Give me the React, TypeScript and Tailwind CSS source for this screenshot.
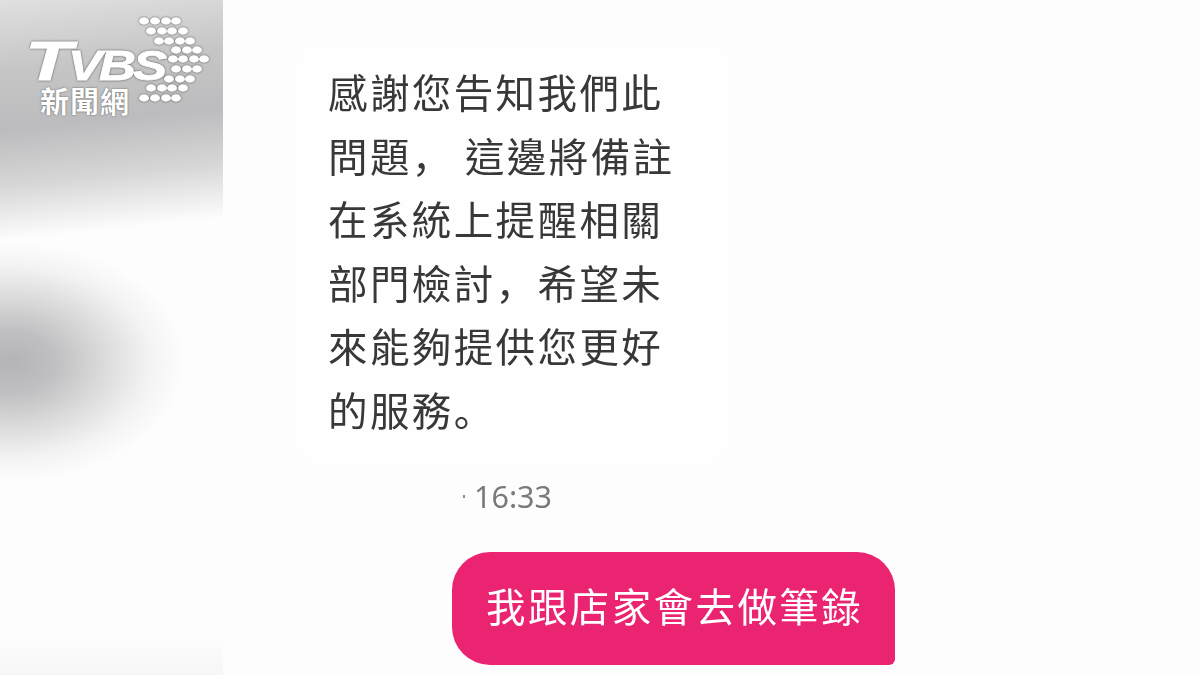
const dotRows = [
  { y: 21, xs: [144, 155, 166, 176] },
  { y: 31, xs: [151, 162, 172, 183] },
  { y: 41, xs: [159, 169, 180, 190] },
  { y: 50, xs: [176, 187, 197] },
  { y: 59, xs: [173, 183, 194, 204] },
  { y: 69, xs: [176, 187, 197] },
  { y: 79, xs: [169, 180, 190] },
  { y: 88, xs: [151, 162, 172, 183] },
  { y: 98, xs: [144, 155, 166, 176] },
];

const messageLines = [
  "感謝您告知我們此",
  "問題， 這邊將備註",
  "在系統上提醒相關",
  "部門檢討，希望未",
  "來能夠提供您更好",
  "的服務。",
];

// the comma and full stop sit low-left in the picture, as in the SC cut
function ChatLine({ text }: { text: string }) {
  return (
    <>
      {text.split(/([，。])/).map((part, i) =>
        part === "，" || part === "。" ? (
          <span key={i} className="font-['Noto_Sans_CJK_SC',sans-serif]">
            {part}
          </span>
        ) : (
          <span key={i}>{part}</span>
        ),
      )}
    </>
  );
}

function Logo() {
  return (
    <div className="absolute left-0 top-0 h-[120px] w-[223px]">
      <svg width="223" height="120" className="absolute left-0 top-0 drop-shadow-[0_0_1px_#555555]">
        {dotRows.map((row) =>
          row.xs.map((x) => (
            <ellipse key={`${row.y}-${x}`} cx={x} cy={row.y} rx="5" ry="3.7" fill="#ffffff" />
          )),
        )}
        <g
          fill="#ffffff"
          stroke="#ffffff"
          strokeWidth="0.8"
          fontFamily="'Liberation Sans', sans-serif"
          fontWeight="700"
          fontStyle="italic"
        >
          <text transform="translate(25 80) scale(1.4 1)" fontSize="55">
            T
          </text>
          <text transform="translate(68 80) scale(1.22 1)" fontSize="42" letterSpacing="-2.5">
            VBS
          </text>
        </g>
      </svg>
      <div className="absolute left-[40px] top-[86px] font-['Noto_Sans_CJK_TC',sans-serif] text-[29px] font-bold leading-[28px] tracking-[1px] text-white [text-shadow:0_0_2px_#555]">
        新聞網
      </div>
    </div>
  );
}

export default function App() {
  return (
    <div className="relative flex h-[675px] w-[1200px] overflow-hidden bg-[#fefdfe] font-['Noto_Sans_CJK_TC',sans-serif]">
      {/* blurred side strip */}
      <div className="h-full w-[223px] shrink-0 bg-[radial-gradient(ellipse_175px_120px_at_10px_362px,#b4b3b5_0%,#bfbec0_25%,#dddcdd_55%,#f4f3f4_80%,#fefdfe00_100%),linear-gradient(0deg,#f7f6f7_0px,#fefdfe00_40px),linear-gradient(174deg,#e0e0e0_0px,#c6c6c7_70px,#bcbbbd_130px,#d6d6d7_185px,#fefdfe_240px,#fefdfe_100%)]" />

      <div className="flex flex-1 flex-col items-start pl-[72px] pt-[45px]">
        <div className="h-[420px] w-[435px] rounded-[24px] bg-[#fefefe] pl-[33px] pt-[14px]">
          {messageLines.map((line) => (
            <p
              key={line}
              className="h-[63.5px] whitespace-pre text-[39.5px] leading-[63.5px] tracking-[2.4px] text-[#383838] blur-[0.5px]"
            >
              <ChatLine text={line} />
            </p>
          ))}
        </div>

        <div className="ml-[168px] mt-[13px] flex items-center gap-[9px] font-['Noto_Sans',sans-serif] text-[30.5px] leading-[36px] text-[#7a7a7a] blur-[0.5px]">
          <span className="h-[3px] w-[2px] bg-[#8a8a8a]" />
          <span>16:33</span>
        </div>

        <div className="ml-[157px] mt-[38px] flex h-[113px] w-[443px] items-center rounded-bl-[38px] rounded-br-[6px] rounded-tl-[38px] rounded-tr-[38px] bg-[#ea2470] pb-[8px] pl-[34px]">
          <span className="whitespace-pre text-[39.5px] leading-none tracking-[2.4px] text-white blur-[0.5px]">
            我跟店家會去做筆錄
          </span>
        </div>
      </div>

      <Logo />
    </div>
  );
}
